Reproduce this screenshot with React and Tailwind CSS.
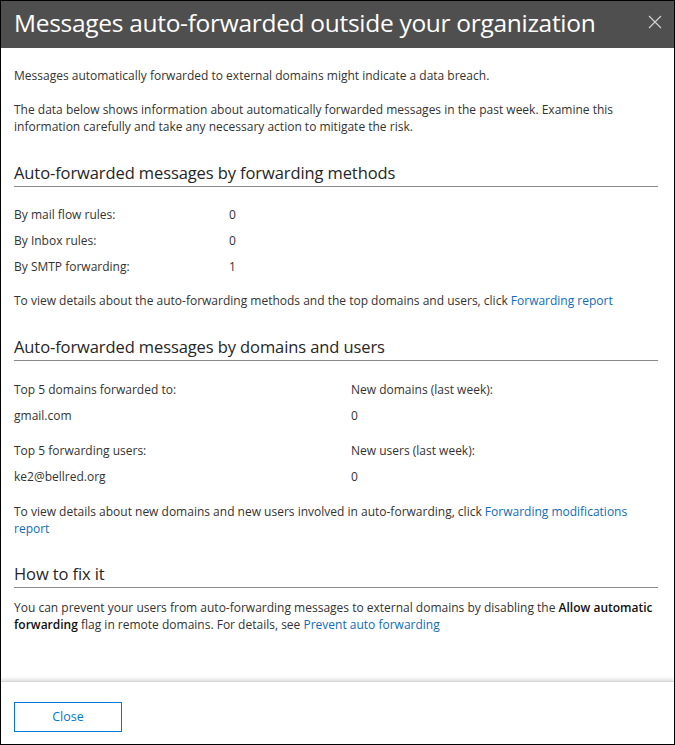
import React from "react";

const font = { fontFamily: '"Open Sans", "Noto Sans", sans-serif' };

function Heading({ children, className = "" }) {
  return (
    <div className={`border-b border-[#8a8a8a] pb-[2px] ${className}`}>
      <h2 className="text-[16.5px] leading-[22px] text-[#262626] tracking-[-0.1px]">{children}</h2>
    </div>
  );
}

function Link({ children }) {
  return <a className="text-[#0f6cbd] cursor-pointer">{children}</a>;
}

export default function App() {
  const methods = [
    ["By mail flow rules:", "0"],
    ["By Inbox rules:", "0"],
    ["By SMTP forwarding:", "1"],
  ];

  return (
    <div
      className="w-[675px] h-[745px] bg-white border border-black flex flex-col text-[#333] overflow-hidden"
      style={font}
    >
      {/* Header */}
      <div className="h-[47px] shrink-0 bg-[#4f4f4f] flex items-center justify-between pl-[13px] pr-[12px]">
        <h1 className="text-[24.5px] leading-none text-white tracking-[-0.3px] pb-[3px]">
          Messages auto-forwarded outside your organization
        </h1>
        <button className="text-[#d0d0d0] mb-[6px]">
          <svg width="14" height="14" viewBox="0 0 14 14" fill="none" stroke="currentColor" strokeWidth="1.2">
            <path d="M1 1 L13 13 M13 1 L1 13" />
          </svg>
        </button>
      </div>

      {/* Body */}
      <div className="flex-1 pl-[13px] pr-[16px] text-[12px] leading-[17px]">
        <p className="mt-[19px]">
          Messages automatically forwarded to external domains might indicate a data breach.
        </p>
        <p className="mt-[17px]">
          The data below shows information about automatically forwarded messages in the past week. Examine this
          information carefully and take any necessary action to mitigate the risk.
        </p>

        <Heading className="mt-[27px]">Auto-forwarded messages by forwarding methods</Heading>

        <div className="mt-[19px] flex flex-col gap-[9px]">
          {methods.map(([label, value]) => (
            <div key={label} className="flex">
              <span className="w-[215px]">{label}</span>
              <span>{value}</span>
            </div>
          ))}
        </div>

        <p className="mt-[17px]">
          To view details about the auto-forwarding methods and the top domains and users, click{" "}
          <Link>Forwarding report</Link>
        </p>

        <Heading className="mt-[27px]">Auto-forwarded messages by domains and users</Heading>

        <div className="mt-[20px] grid grid-cols-[337px_1fr] gap-y-[9px]">
          <span>Top 5 domains forwarded to:</span>
          <span>New domains (last week):</span>
          <span>gmail.com</span>
          <span>0</span>
          <span className="mt-[9px]">Top 5 forwarding users:</span>
          <span className="mt-[9px]">New users (last week):</span>
          <span>ke2@bellred.org</span>
          <span>0</span>
        </div>

        <p className="mt-[18px]">
          To view details about new domains and new users involved in auto-forwarding, click{" "}
          <Link>Forwarding modifications</Link> <Link>report</Link>
        </p>

        <Heading className="mt-[26px]">How to fix it</Heading>

        <p className="mt-[11px]">
          You can prevent your users from auto-forwarding messages to external domains by disabling the{" "}
          <b className="text-[#111] font-semibold">Allow automatic</b>{" "}
          <b className="text-[#111] font-semibold">forwarding</b> flag in remote domains. For details, see{" "}
          <Link>Prevent auto forwarding</Link>
        </p>
      </div>

      {/* Footer */}
      <div className="shrink-0 h-[63px] border-t border-[#d4d4d4] shadow-[0_-2px_3px_rgba(0,0,0,0.12)] px-[13px] pt-[20px]">
        <button className="w-[108px] h-[30px] border border-[#0078d4] text-[#0078d4] text-[12.5px] leading-none">
          Close
        </button>
      </div>
    </div>
  );
}
